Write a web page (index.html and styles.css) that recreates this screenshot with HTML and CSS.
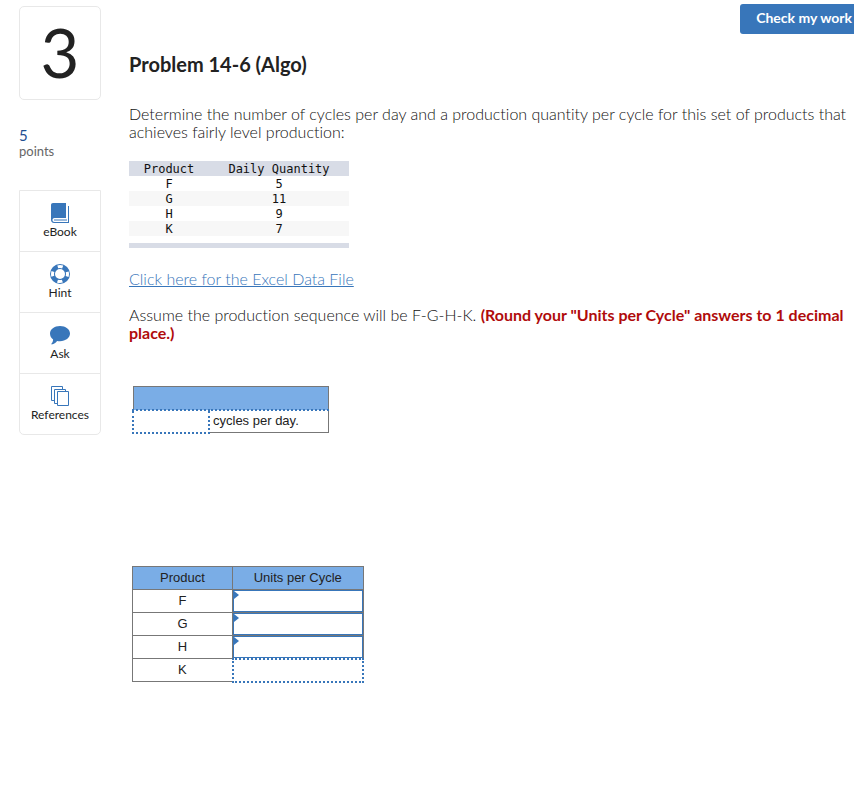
FILE: index.html
```html
<!DOCTYPE html>
<html lang="en">
<head>
	<title>Problem 14-6 (Algo)</title>
	<meta charset="utf-8">
	<link rel="stylesheet" href="styles.css">
</head>
<body>
	<div class="page">
		<aside class="sidebar">
			<div class="question-number">3</div>
			<div class="points"><span class="points-value">5</span>points</div>
			<nav class="tools">
				<a class="tool" href="#ebook">
					<svg width="20" height="20" viewBox="0 0 20 20">
						<path d="M3 0h13v15H4.500C3 15 2.500 16 2.500 17s.5 2 2 2H18V3h1v17H4C2 20 1 18.500 1 17V2c0-1.200.800-2 2-2z" fill="#3876ba"/>
						<path d="M4 17h13" stroke="#3876ba"/>
					</svg>
					eBook
				</a>
				<a class="tool" href="#hint">
					<svg width="20" height="20" viewBox="0 0 20 20" fill="none">
						<circle cx="10" cy="10" r="7.500" stroke="#3876ba" stroke-width="5"/>
						<circle cx="10" cy="10" r="7.500" stroke="#fff" stroke-width="3" stroke-dasharray="5 6.780" stroke-dashoffset="2.500"/>
					</svg>
					Hint
				</a>
				<a class="tool" href="#ask">
					<svg width="20" height="20" viewBox="0 0 20 20" fill="#3876ba">
						<path d="M10 1c5.600 0 10 3.300 10 7.600s-4.400 7.600-10 7.600c-1 0-2-.1-2.900-.3C5.500 18 3.400 19.300 1 19.300c1.200-1.200 2-2.700 2.100-4.700C1.200 13.200 0 11 0 8.600 0 4.300 4.400 1 10 1z"/>
					</svg>
					Ask
				</a>
				<a class="tool" href="#references">
					<svg width="20" height="20" viewBox="0 0 20 20" fill="#fff" stroke="#3876ba">
						<path d="M1.500.5h11v14h-11z"/>
						<path d="M4.500 3.500h11v14h-11z"/>
						<path d="M7.500 5.500h11v14h-11z"/>
					</svg>
					References
				</a>
			</nav>
		</aside>

		<main class="content">
			<div class="toolbar"><button class="check-btn" type="button">Check my work</button></div>
			<h1>Problem 14-6 (Algo)</h1>
			<p>Determine the number of cycles per day and a production quantity per cycle for this set of products that<br>achieves fairly level production:</p>

			<table class="data">
				<thead>
					<tr><th>Product</th><th>Daily Quantity</th></tr>
				</thead>
				<tbody>
					<tr><td>F</td><td>5</td></tr>
					<tr><td>G</td><td>11</td></tr>
					<tr><td>H</td><td>9</td></tr>
					<tr><td>K</td><td>7</td></tr>
				</tbody>
			</table>
			<hr class="data-end">

			<p><a class="file-link" href="#excel">Click here for the Excel Data File</a></p>
			<p>Assume the production sequence will be F-G-H-K. <strong>(Round your "Units per Cycle" answers to 1 decimal<br>place.)</strong></p>

			<table class="sheet cycles">
				<colgroup><col class="col-input"><col></colgroup>
				<tr><th colspan="2"></th></tr>
				<tr>
					<td class="pending"><input id="cycles" type="text"></td>
					<td><label for="cycles">cycles per day.</label></td>
				</tr>
			</table>

			<table class="sheet units">
				<tr><th>Product</th><th>Units per Cycle</th></tr>
				<tr><td><label for="units-f">F</label></td><td class="answer"><input id="units-f" type="text"></td></tr>
				<tr><td><label for="units-g">G</label></td><td class="answer"><input id="units-g" type="text"></td></tr>
				<tr><td><label for="units-h">H</label></td><td class="answer"><input id="units-h" type="text"></td></tr>
				<tr><td><label for="units-k">K</label></td><td class="pending"><input id="units-k" type="text"></td></tr>
			</table>
		</main>
	</div>
</body>
</html>
```
FILE: styles.css
```css
* {
	box-sizing: border-box;
}
body {
	margin: 0;
	background: #fff;
	color: #111;
	font: 300 16px/18px Lato, sans-serif;
	font-variant-ligatures: none;
}
.page {
	display: flex;
	gap: 28px;
	padding-left: 19px;
	overflow: hidden;
}

/* left column */
.sidebar {
	flex: none;
	width: 82px;
	padding-top: 6px;
}
.question-number {
	height: 94px;
	border: 1px solid #e8e8e8;
	border-radius: 5px;
	color: #222;
	font-size: 67px;
	font-weight: 400;
	line-height: 90px;
	text-align: center;
}
.points {
	margin: 27px 0 31px;
	color: #666;
	font-size: 13px;
	font-weight: 400;
	line-height: 16px;
}
.points-value {
	display: block;
	color: #1d4f91;
	font-size: 15px;
	line-height: 16px;
}
.tools {
	border: 1px solid #e8e8e8;
	border-radius: 0 0 5px 5px;
}
.tool {
	display: flex;
	flex-direction: column;
	align-items: center;
	gap: 1px;
	height: 61px;
	padding-top: 12px;
	color: #222;
	font-size: 12px;
	font-weight: 400;
	line-height: 16px;
	text-decoration: none;
}
.tool:first-child {
	height: 60px;
}
.tool + .tool {
	border-top: 1px solid #e8e8e8;
}

/* question */
.content {
	flex: 1;
	min-width: 0;
}
.toolbar {
	display: flex;
	justify-content: flex-end;
	padding-top: 4px;
}
.check-btn {
	height: 30px;
	padding: 0 2px 2px 16px;
	border: 0;
	border-radius: 3px 0 0 3px;
	background: #3876ba;
	color: #fff;
	font: bold 14px/18px Lato, sans-serif;
}
h1 {
	margin: 20px 0 31px;
	color: #222;
	font-size: 20px;
	font-weight: bold;
	line-height: 20px;
}
p {
	margin: 0 0 18px;
	white-space: nowrap;
}
strong {
	color: #b00b0b;
	font-weight: bold;
}
.file-link {
	color: #3876ba;
}

.data {
	width: 220px;
	margin-top: 20px;
	border-collapse: collapse;
	font: 12px/14px "DejaVu Sans Mono", monospace;
	text-align: center;
}
.data th,
.data td {
	padding: 1px 0 0;
}
.data th {
	width: 140px;
	background: #d8dce6;
	font-weight: normal;
}
.data th:first-child {
	width: 80px;
}
.data tr:nth-child(even) td {
	background: #f7f7f7;
}
.data-end {
	width: 220px;
	height: 5px;
	margin: 7px 0 22px;
	border: 0;
	background: #d8dce6;
}

/* answer sheets */
.sheet {
	margin-left: 3px;
	border-collapse: collapse;
	table-layout: fixed;
	color: #222;
	font: 13px/16px "Liberation Sans", Arial, sans-serif;
}
.sheet th,
.sheet td {
	height: 23px;
	padding: 0;
	border: 1px solid #777;
	text-align: center;
}
.sheet th {
	background: #7aade6;
	font-weight: normal;
}
.sheet input {
	display: block;
	width: 100%;
	height: 20px;
	padding: 0 4px;
	border: 0;
	outline: 0;
	background: none;
	font: inherit;
}
.cycles {
	width: 197px;
	margin-top: 44px;
	margin-bottom: 132px;
}
.col-input {
	width: 76px;
}
.cycles th {
	border-bottom: 2px dotted #3876ba;
}
.cycles td:last-child {
	padding-left: 3px;
	text-align: left;
}
.units {
	width: 232px;
}
.units th:first-child {
	width: 100px;
}
.sheet .pending {
	border: 2px dotted #3876ba;
}
.sheet .answer {
	position: relative;
}
.answer input {
	height: 22px;
	border: 1px solid #3876ba;
}
.answer::before {
	content: "";
	position: absolute;
	top: 1px;
	left: 1px;
	border-left: 5px solid #3876ba;
	border-top: 4px solid transparent;
	border-bottom: 4px solid transparent;
}
```
